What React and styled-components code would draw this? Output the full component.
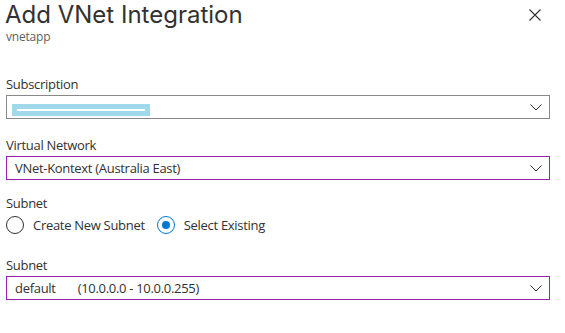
import React, { useState } from "react";
import styled, { createGlobalStyle } from "styled-components";

const Global = createGlobalStyle`
  body {
    margin: 0;
    background: #ffffff;
    font-family: "Open Sans", "Noto Sans", sans-serif;
    color: #323130;
  }
`;

const Panel = styled.div`
  width: 565px;
  height: 333px;
  box-sizing: border-box;
  padding: 0 15px 0 6px;
  overflow: hidden;
`;

const Header = styled.div`
  display: flex;
  justify-content: space-between;
  align-items: flex-start;
`;

const Title = styled.h1`
  margin: 0 0 0 -1px;
  font-family: Inter, "Open Sans", sans-serif;
  font-size: 24px;
  font-weight: 400;
  line-height: 29px;
`;

const Sub = styled.div`
  font-size: 12px;
  line-height: 16px;
  color: #605e5c;
  letter-spacing: -0.2px;
`;

const Close = styled.button`
  border: none;
  background: none;
  padding: 0;
  margin: 9px 9px 0 0;
  width: 12px;
  height: 12px;
  display: flex;
  cursor: pointer;
`;

const Field = styled.div`
  margin-top: ${(p) => p.$top}px;
`;

const Label = styled.div`
  font-size: 13px;
  line-height: 18px;
  letter-spacing: -0.3px;
  margin-bottom: 2px;
`;

const Select = styled.div`
  height: 24px;
  box-sizing: border-box;
  border: 1px solid ${(p) => (p.$focus ? "#9a1fae" : "#8a8886")};
  display: flex;
  align-items: center;
  padding: 0 7px 0 8px;
  font-size: 13px;
  letter-spacing: -0.3px;
`;

const Value = styled.div`
  flex: 1;
  align-self: stretch;
  display: flex;
  align-items: center;
  white-space: pre;
`;

const Range = styled.span`
  margin-left: 22px;
`;

const Redact = styled.div`
  width: 138px;
  height: 12px;
  align-self: flex-end;
  margin: 0 0 2px -3px;
  background: #9fd9ea;
  display: flex;
  align-items: center;
  justify-content: center;
  &::after {
    content: "";
    width: 128px;
    height: 2px;
    background: #ffffff;
  }
`;

const RadioRow = styled.div`
  display: flex;
  align-items: center;
  gap: 12px;
  height: 22px;
  font-size: 13px;
  letter-spacing: -0.3px;
`;

const RadioItem = styled.label`
  display: flex;
  align-items: center;
  gap: 9px;
  cursor: pointer;
`;

const Circle = styled.span`
  width: 18px;
  height: 18px;
  box-sizing: border-box;
  border-radius: 50%;
  border: 1px solid ${(p) => (p.$on ? "#0078d4" : "#323130")};
  display: flex;
  align-items: center;
  justify-content: center;
  &::after {
    content: "";
    width: 8px;
    height: 8px;
    border-radius: 50%;
    background: ${(p) => (p.$on ? "#0078d4" : "transparent")};
  }
`;

const Chevron = () => (
  <svg width="12" height="7" viewBox="0 0 12 7">
    <path d="M0.5 0.5 L6 6 L11.5 0.5" fill="none" stroke="#323130" strokeWidth="1" />
  </svg>
);

const CloseIcon = () => (
  <svg width="12" height="12" viewBox="0 0 12 12">
    <path d="M0.5 0.5 L11.5 11.5 M11.5 0.5 L0.5 11.5" stroke="#323130" strokeWidth="1.1" />
  </svg>
);

function Dropdown({ focus, children }) {
  return (
    <Select $focus={focus}>
      <Value>{children}</Value>
      <Chevron />
    </Select>
  );
}

export default function App() {
  const [mode, setMode] = useState("existing");

  return (
    <Panel>
      <Global />
      <Header>
        <div>
          <Title>Add VNet Integration</Title>
          <Sub>vnetapp</Sub>
        </div>
        <Close aria-label="Close">
          <CloseIcon />
        </Close>
      </Header>

      <Field $top={30}>
        <Label>Subscription</Label>
        <Dropdown>
          <Redact />
        </Dropdown>
      </Field>

      <Field $top={17}>
        <Label>Virtual Network</Label>
        <Dropdown focus>VNet-Kontext (Australia East)</Dropdown>
      </Field>

      <Field $top={14}>
        <Label>Subnet</Label>
        <RadioRow>
          <RadioItem onClick={() => setMode("new")}>
            <Circle $on={mode === "new"} />
            Create New Subnet
          </RadioItem>
          <RadioItem onClick={() => setMode("existing")}>
            <Circle $on={mode === "existing"} />
            Select Existing
          </RadioItem>
        </RadioRow>
      </Field>

      <Field $top={20}>
        <Label>Subnet</Label>
        <Dropdown focus>
          default<Range>(10.0.0.0 - 10.0.0.255)</Range>
        </Dropdown>
      </Field>
    </Panel>
  );
}
